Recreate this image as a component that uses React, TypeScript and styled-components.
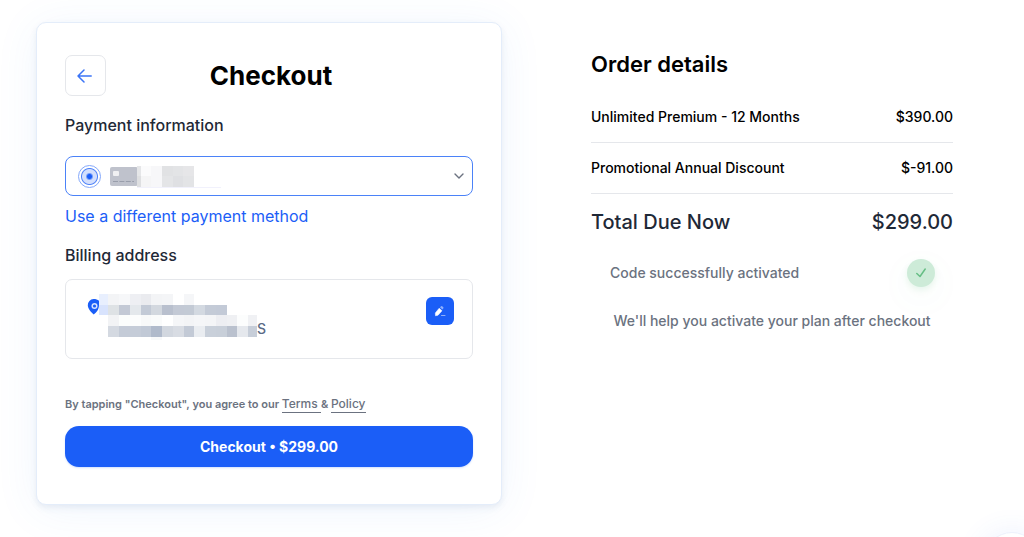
import React from "react";
import styled, { createGlobalStyle } from "styled-components";

const GlobalStyle = createGlobalStyle`
  *, *::before, *::after { box-sizing: border-box; }
  body {
    margin: 0;
    background: #ffffff;
    color: #000000;
    font-family: Inter, "Liberation Sans", sans-serif;
  }
  h1, h2, h3, p, dl, dt, dd, address { margin: 0; }
  button, select { font: inherit; cursor: pointer; }
`;

const Page = styled.main`
  display: grid;
  grid-template-columns: minmax(0, 466fr) minmax(0, 362fr);
  column-gap: 89px;
  align-items: start;
  padding: 22px 71px 32px 36px;
`;

const Card = styled.section`
  display: flex;
  flex-direction: column;
  padding: 32px 28px 37px;
  border: 1px solid #e4edfa;
  border-radius: 10px;
  background: #ffffff;
  box-shadow: 0 3px 6px rgba(70, 100, 150, 0.1), 0 5px 44px rgba(60, 140, 246, 0.08);
`;

const Header = styled.header`
  display: grid;
  grid-template-columns: 41px 1fr 37px;
  align-items: center;
`;

const BackButton = styled.button`
  display: grid;
  place-items: center;
  width: 41px;
  height: 41px;
  padding: 0 2px 0 0;
  border: 1px solid #e5e7eb;
  border-radius: 7px;
  background: #ffffff;
`;

const Title = styled.h1`
  font-size: 26px;
  line-height: 32px;
  font-weight: 700;
  text-align: center;
`;

const SectionTitle = styled.h2<{ $top: number; $bottom: number }>`
  margin-top: ${(p) => p.$top}px;
  margin-bottom: ${(p) => p.$bottom}px;
  color: #1f2937;
  font-size: 16px;
  line-height: 20px;
  font-weight: 500;
`;

const MethodField = styled.div`
  display: flex;
  align-items: center;
  height: 40px;
  padding: 0 8px 0 12px;
  border: 1px solid #4b82f8;
  border-radius: 8px;
`;

const MethodRadio = styled.input`
  appearance: none;
  flex: none;
  width: 23px;
  height: 23px;
  margin: 0 9px 0 0;
  border: 1px solid #84a8fb;
  border-radius: 50%;
  background: radial-gradient(circle, #1b5ef7 0 2px, #d3dffd 4px 7px, #4e82f8 8px, #ffffff 9px);
`;

const MethodSelect = styled.select`
  appearance: none;
  flex: 1;
  min-width: 0;
  height: 38px;
  border: 0;
  outline: 0;
  background: transparent;
`;

const MethodLink = styled.a`
  align-self: flex-start;
  margin-top: 10px;
  color: #1b5ef7;
  font-size: 16px;
  line-height: 20px;
  text-decoration: none;
`;

const AddressBox = styled.div`
  display: flex;
  align-items: flex-start;
  height: 80px;
  padding: 14px 18px 0 21px;
  border: 1px solid #e5e7eb;
  border-radius: 7px;
`;

const PinIcon = styled.svg`
  flex: none;
  margin-top: 5px;
`;

const Address = styled.address`
  display: flex;
  flex: 1;
  align-items: flex-end;
  height: 47px;
  color: #5a6b86;
  font-size: 14px;
  line-height: 24px;
  font-style: normal;
  font-weight: 500;

  svg { flex: none; }
`;

const EditButton = styled.button`
  display: grid;
  place-items: center;
  width: 28px;
  height: 28px;
  margin-top: 3px;
  padding: 0;
  border: 0;
  border-radius: 6px;
  background: #1b5ef7;
`;

const Terms = styled.p`
  margin-top: 35px;
  color: #6b7280;
  font-size: 11px;
  line-height: 20px;
  font-weight: 600;
`;

const TermsLink = styled.a`
  padding-bottom: 1px;
  border-bottom: 1px solid #6b7280;
  color: inherit;
  font-size: 12px;
  font-weight: 500;
  text-decoration: none;
`;

const PayButton = styled.button`
  height: 41px;
  margin-top: 12px;
  border: 0;
  border-radius: 14px;
  background: #1b5ef7;
  box-shadow: 0 1px 2px rgba(27, 94, 247, 0.2);
  color: #ffffff;
  font-size: 14px;
  line-height: 20px;
  font-weight: 700;
`;

const Order = styled.section`
  padding-top: 28px;
`;

const OrderTitle = styled.h2`
  margin-bottom: 14px;
  font-size: 22px;
  line-height: 28px;
  font-weight: 600;
`;

const OrderRow = styled.div`
  display: flex;
  align-items: center;
  justify-content: space-between;
  height: 51px;
  border-bottom: 1px solid #e5e7eb;
  font-size: 14px;
  line-height: 20px;
  font-weight: 500;
`;

const TotalRow = styled(OrderRow)`
  height: 56px;
  border: 0;
  color: #1f2937;
  font-size: 20px;
  line-height: 28px;
`;

const Notice = styled.div`
  display: flex;
  align-items: center;
  justify-content: space-between;
  margin-top: 9px;
  padding: 0 18px 0 19px;
  color: #6b7280;
  font-size: 14px;
  line-height: 20px;
  font-weight: 500;
`;

const CheckBadge = styled.span`
  display: grid;
  place-items: center;
  width: 28px;
  height: 28px;
  border-radius: 50%;
  background: #cdebd8;
  box-shadow: 0 3px 6px rgba(90, 190, 130, 0.14), 0 10px 36px rgba(90, 190, 130, 0.06);
`;

const HelpText = styled.p`
  margin-top: 24px;
  color: #6b7280;
  font-size: 14px;
  line-height: 20px;
  font-weight: 500;
  text-align: center;
`;

const ChatLauncher = styled.button`
  position: fixed;
  right: -16px;
  bottom: -51px;
  width: 56px;
  height: 56px;
  border: 1px solid #edf1fc;
  border-radius: 50%;
  background: #ffffff;
  box-shadow: 0 3px 32px rgba(60, 110, 246, 0.12);
`;

const addressColumns = [0, 28, 61, 93, 125, 157, 190, 222, 254, 286, 319, 351, 383, 415, 447, 474];
const addressRows = [0, 32, 64, 96, 128, 139];
const addressShades = [
  ["#e8effe", "#f3f4f6", "#f6f7f9", "#eeeff3", "#eaebef", "#f3f4f6", "#f4f5f7", "", "#f5f6f8", "", "", "", "", "", ""],
  ["#d8e3fd", "#dee2e5", "#c3c9d5", "#e4e8ec", "#c3cad6", "#d3d8df", "#b9c0ce", "#c3c9d5", "#c3cad5", "#d3d9e1", "#c4cbd7", "#c3cad7", "", "", ""],
  ["", "#f2f3f5", "#fbfdfc", "#fcfdfd", "#f8f9f9", "#fafbfb", "#ffffff", "#f5f6f8", "#f3f4f6", "#f5f6f8", "#f4f5f7", "#edeef2", "#eff0f3", "#fcfdfd", "#f0f1f4"],
  ["", "#d4d9e1", "#c4cbd7", "#c5ccd8", "#c1c9d6", "#b0bacb", "#d2d7df", "#d8dce3", "#c3cad6", "#eaedf1", "#c9d0da", "#c8cfd9", "#bac1ce", "#e5e8ed", "#c7ced9"],
  ["", "", "", "", "", "#f8f9fa", "", "", "", "", "", "", "", "", ""],
];

const AddressMosaic = () => (
  <svg width="158" height="47" viewBox="0 0 474 141" aria-hidden="true">
    {addressShades.map((row, y) =>
      row.map((fill, x) =>
        fill ? (
          <rect
            key={`${x}-${y}`}
            x={addressColumns[x]}
            y={addressRows[y]}
            width={addressColumns[x + 1] - addressColumns[x]}
            height={addressRows[y + 1] - addressRows[y]}
            fill={fill}
            shapeRendering="crispEdges"
          />
        ) : null
      )
    )}
  </svg>
);

const CardNumberMosaic = () => (
  <svg width="111" height="24" viewBox="0 -2 111 24" aria-hidden="true">
    <rect width="28" height="19" y="1" rx="2" fill="#bfc2cc" />
    <rect x="3" y="5" width="6" height="5" rx="1" fill="#f0f0f2" />
    <path d="M3 15.5h21" stroke="#999eab" strokeDasharray="5 1.4" />
    <g shapeRendering="crispEdges">
      <rect x="27" width="4" height="10" fill="#e5e6e8" />
      <rect x="27" y="10" width="4" height="11" fill="#dedfe1" />
      <rect x="31" width="10" height="10" fill="#fbfbfc" />
      <rect x="31" y="10" width="10" height="11" fill="#f5f5f6" />
      <rect x="41" width="11" height="21" fill="#f7f7f9" />
      <rect x="52" width="11" height="10" fill="#e1e2e4" />
      <rect x="52" y="10" width="11" height="11" fill="#e4e5e7" />
      <rect x="63" width="10" height="10" fill="#e3e4e6" />
      <rect x="63" y="10" width="10" height="11" fill="#dfe0e3" />
      <rect x="73" width="11" height="10" fill="#e6e6e8" />
      <rect x="73" y="10" width="11" height="11" fill="#e3e4e6" />
      <rect x="27" y="21" width="84" height="1" fill="#f1f1fc" />
    </g>
  </svg>
);

export default function App() {
  return (
    <>
      <GlobalStyle />
      <Page>
        <Card>
          <Header>
            <BackButton type="button" aria-label="Back">
              <svg width="15" height="14" viewBox="0 0 15 14" fill="none" stroke="#3b74f6" strokeWidth="1.5" strokeLinecap="round" strokeLinejoin="round" aria-hidden="true">
                <path d="M14.200 7H1M7 1 1 7l6 6" />
              </svg>
            </BackButton>
            <Title>Checkout</Title>
          </Header>

          <SectionTitle $top={19} $bottom={21}>Payment information</SectionTitle>
          <MethodField>
            <MethodRadio type="radio" name="method" defaultChecked aria-label="Saved card" />
            <CardNumberMosaic />
            <MethodSelect aria-label="Payment method">
              <option aria-label="Saved card" />
            </MethodSelect>
            <svg width="10" height="6" viewBox="0 0 10 6" fill="none" stroke="#6b7280" strokeWidth="1.4" strokeLinecap="round" strokeLinejoin="round" aria-hidden="true">
              <path d="m1 1 4 4 4-4" />
            </svg>
          </MethodField>
          <MethodLink href="#method">Use a different payment method</MethodLink>

          <SectionTitle $top={19} $bottom={14}>Billing address</SectionTitle>
          <AddressBox>
            <PinIcon width="12" height="16" viewBox="0 0 12 16" aria-hidden="true">
              <path d="M6.5 0A6 6 0 0 0 .8 6.2C.8 9.800 4 13 6.700 15.500 9 13.600 12 11 12 6V1.700C10.700.6 8.800 0 6.500 0Z" fill="#1b5ef7" />
              <circle cx="7.500" cy="7" r="2.300" fill="#1b5ef7" stroke="#d5e1fe" strokeWidth="1.500" />
            </PinIcon>
            <Address>
              <AddressMosaic />
              S
            </Address>
            <EditButton type="button" aria-label="Edit billing address">
              <svg width="12" height="12" viewBox="0 0 12 12" aria-hidden="true">
                <path d="M5.200 3.200 8 5.800 4 10.200 1.500 10.800 1.300 8Z" fill="#ffffff" stroke="#ffffff" strokeWidth=".5" strokeLinejoin="round" />
                <path d="m6 2.200.800-.800a1.200 1.200 0 0 1 1.700 0l.6.600a1.200 1.200 0 0 1 0 1.700l-.8.900Z" fill="#8fb0fb" />
                <path d="M7.500 10.500h3.500" stroke="#8fb0fb" strokeLinecap="round" />
              </svg>
            </EditButton>
          </AddressBox>

          <Terms>
            By tapping "Checkout", you agree to our <TermsLink href="#terms">Terms </TermsLink> &amp;{" "}
            <TermsLink href="#policy">Policy</TermsLink>
          </Terms>
          <PayButton type="button">Checkout • $299.00</PayButton>
        </Card>

        <Order>
          <OrderTitle>Order details</OrderTitle>
          <dl>
            <OrderRow>
              <dt>Unlimited Premium - 12 Months</dt>
              <dd>$390.00</dd>
            </OrderRow>
            <OrderRow>
              <dt>Promotional Annual Discount</dt>
              <dd>$-91.00</dd>
            </OrderRow>
            <TotalRow>
              <dt>Total Due Now</dt>
              <dd>$299.00</dd>
            </TotalRow>
          </dl>
          <Notice>
            <span>Code successfully activated</span>
            <CheckBadge>
              <svg width="10" height="10" viewBox="0 0 10 10" fill="none" stroke="#66be85" strokeWidth="1.500" strokeLinecap="round" strokeLinejoin="round" aria-hidden="true">
                <path d="m.8 5.500 3.200 3 5.200-7.500" />
              </svg>
            </CheckBadge>
          </Notice>
          <HelpText>We'll help you activate your plan after checkout</HelpText>
        </Order>
      </Page>
      <ChatLauncher type="button" aria-label="Open chat" />
    </>
  );
}
